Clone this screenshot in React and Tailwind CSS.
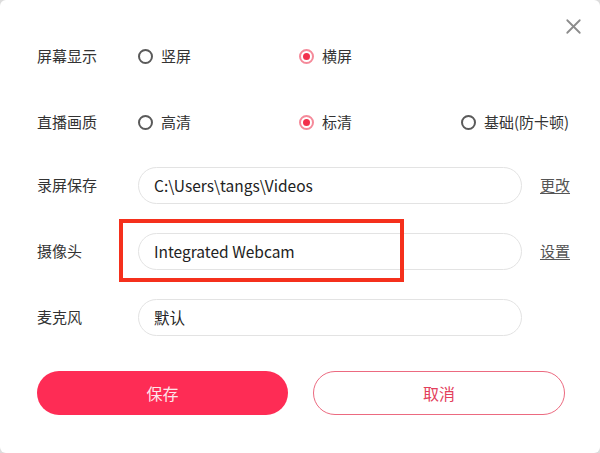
import { X } from 'lucide-react';

const font = { fontFamily: '"Noto Sans CJK SC", "Noto Sans", sans-serif' };

function Radio({ checked, label, className = '' }) {
  return (
    <label className={`flex items-center gap-[8px] text-[15px] text-[#333] ${className}`}>
      {checked ? (
        <span className="flex h-[15px] w-[15px] items-center justify-center rounded-full border-2 border-[#f58a9a]">
          <span className="h-[7px] w-[7px] rounded-full bg-[#f2304c]" />
        </span>
      ) : (
        <span className="h-[15px] w-[15px] rounded-full border-2 border-[#5a5a5a]" />
      )}
      <span>{label}</span>
    </label>
  );
}

function Field({ value }) {
  return (
    <div className="flex h-[37px] w-[384px] items-center rounded-full border border-[#e3e3e3] pl-[15px] text-[15.5px] text-[#222]">
      {value}
    </div>
  );
}

function Row({ label, children, className = '' }) {
  return (
    <div className={`flex h-[37px] items-center ${className}`}>
      <span className="w-[101px] text-[15px] text-[#333]">{label}</span>
      {children}
    </div>
  );
}

export default function App() {
  return (
    <div className="h-[453px] w-[600px] bg-[#dcdcdc]" style={font}>
      <div className="relative h-full w-full rounded-[6px] bg-white pl-[37px]">
        <button type="button" className="absolute right-[14px] top-[14px] text-[#8c8c8c]">
          <X className="h-[25px] w-[25px]" strokeWidth={1.7} />
        </button>

        <div className="pt-[38px]">
          <Row label="屏幕显示">
            <Radio label="竖屏" className="w-[161px]" />
            <Radio checked label="横屏" />
          </Row>

          <Row label="直播画质" className="mt-[29px]">
            <Radio label="高清" className="w-[161px]" />
            <Radio checked label="标清" className="w-[162px]" />
            <Radio label="基础(防卡顿)" />
          </Row>

          <Row label="录屏保存" className="mt-[26px]">
            <Field value="C:\Users\tangs\Videos" />
            <a className="ml-[18px] text-[15px] text-[#555] underline underline-offset-2">更改</a>
          </Row>

          <Row label="摄像头" className="mt-[29px]">
            <Field value="Integrated Webcam" />
            <a className="ml-[18px] text-[15px] text-[#555] underline underline-offset-2">设置</a>
          </Row>

          <Row label="麦克风" className="mt-[29px]">
            <Field value="默认" />
          </Row>

          <div className="mt-[35px] flex gap-[25px]">
            <button
              type="button"
              className="h-[44px] w-[251px] rounded-full bg-[#fe2c55] text-[16px] text-[#fde6ea]"
            >
              保存
            </button>
            <button
              type="button"
              className="h-[44px] w-[252px] rounded-full border-[1.5px] border-[#ec6a80] bg-white text-[16px] text-[#e3405c]"
            >
              取消
            </button>
          </div>
        </div>

        <div className="pointer-events-none absolute left-[119px] top-[219px] h-[63px] w-[285px] border-[4px] border-[#f5301c]" />
      </div>
    </div>
  );
}
